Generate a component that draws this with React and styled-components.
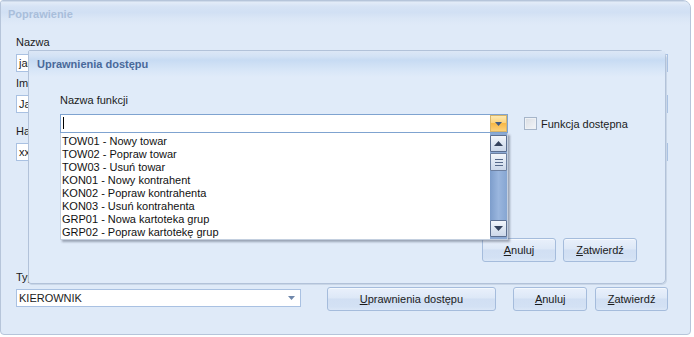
import React from 'react';
import styled, { createGlobalStyle } from 'styled-components';

const GlobalStyle = createGlobalStyle`
  body {
    margin: 0;
    background: #ffffff;
    font-family: "Liberation Sans", Arial, sans-serif;
    font-size: 11px;
    color: #1b1b1b;
  }
`;

const functions = [
  'TOW01 - Nowy towar',
  'TOW02 - Popraw towar',
  'TOW03 - Usuń towar',
  'KON01 - Nowy kontrahent',
  'KON02 - Popraw kontrahenta',
  'KON03 - Usuń kontrahenta',
  'GRP01 - Nowa kartoteka grup',
  'GRP02 - Popraw kartotekę grup',
];

const Arrow = ({ color = '#3d4f6e' }) => (
  <svg width="7" height="4" viewBox="0 0 7 4">
    <path d="M0 0 H7 L3.5 4 Z" fill={color} />
  </svg>
);

const App = () => {
  return (
    <>
      <GlobalStyle />
      <Window>
        <TitleBar>
          <Caption $faded>Poprawienie</Caption>
        </TitleBar>
        <Body>
          <Field $top={11}>
            <Label>Nazwa</Label>
            <TextBox>jan</TextBox>
          </Field>
          <Field $top={5}>
            <Label>Imię</Label>
            <TextBox>Jan</TextBox>
          </Field>
          <Field $top={12}>
            <Label>Hasło</Label>
            <TextBox>xxx</TextBox>
          </Field>
          <BottomRow>
            <Field $top={0} $bottom={4} $width={285}>
              <Label>Typ</Label>
              <TextBox>
                KIEROWNIK
                <ComboArrow>
                  <Arrow color="#6f87ab" />
                </ComboArrow>
              </TextBox>
            </Field>
            <Button $width={170} $left={26}>
              <u>U</u>prawnienia dostępu
            </Button>
            <Button $width={74} $left={17}>
              <u>A</u>nuluj
            </Button>
            <Button $width={73} $left={8}>
              <u>Z</u>atwierdź
            </Button>
          </BottomRow>
        </Body>

        <Dialog>
          <DialogTitle>
            <Caption>Uprawnienia dostępu</Caption>
          </DialogTitle>
          <DialogBody>
            <Label>Nazwa funkcji</Label>
            <ComboRow>
              <ComboWrap>
                <ComboInput>
                  <Caret />
                  <DropButton>
                    <Arrow color="#3f5a84" />
                  </DropButton>
                </ComboInput>
                <DropList>
                  <Items>
                    {functions.map((f) => (
                      <Item key={f}>{f}</Item>
                    ))}
                  </Items>
                  <ScrollBar>
                    <ScrollButton>
                      <svg width="9" height="5" viewBox="0 0 9 5">
                        <path d="M0 5 H9 L4.5 0 Z" fill="#34425c" />
                      </svg>
                    </ScrollButton>
                    <Thumb>
                      <svg width="8" height="7" viewBox="0 0 8 7">
                        <path d="M0 0.5 H8 M0 3.5 H8 M0 6.5 H8" stroke="#56698a" strokeWidth="1" />
                      </svg>
                    </Thumb>
                    <Track />
                    <ScrollButton>
                      <svg width="9" height="5" viewBox="0 0 9 5">
                        <path d="M0 0 H9 L4.5 5 Z" fill="#34425c" />
                      </svg>
                    </ScrollButton>
                  </ScrollBar>
                </DropList>
              </ComboWrap>
              <CheckLabel>
                <CheckBox />
                Funkcja dostępna
              </CheckLabel>
            </ComboRow>
            <DialogButtons>
              <Button $width={74}>
                <u>A</u>nuluj
              </Button>
              <Button $width={74}>
                <u>Z</u>atwierdź
              </Button>
            </DialogButtons>
          </DialogBody>
        </Dialog>
      </Window>
    </>
  );
};

const Window = styled.div`
  position: relative;
  width: 689px;
  height: 333px;
  border: 1px solid #b6c5da;
  border-radius: 3px 8px 4px 4px;
  background: #dfeaf8;
  display: flex;
  flex-direction: column;
  overflow: hidden;
`;

const TitleBar = styled.div`
  height: 22px;
  display: flex;
  align-items: center;
  padding-left: 7px;
  padding-top: 1px;
  background: linear-gradient(#e3ecf8 0%, #d6e3f5 20%, #d1e0f4 45%, #dae6f6 70%, #dfeaf8 100%);
  border-top: 1px solid #cfdbeb;
`;

const Caption = styled.span`
  font-weight: bold;
  font-size: 11px;
  color: ${(p) => (p.$faded ? '#a9bedb' : '#49699a')};
`;

const Body = styled.div`
  flex: 1;
  display: flex;
  flex-direction: column;
  padding: 0 22px 23px 15px;
`;

const Field = styled.div`
  display: flex;
  flex-direction: column;
  gap: 5px;
  margin-top: ${(p) => p.$top}px;
  margin-bottom: ${(p) => p.$bottom || 0}px;
  width: ${(p) => (p.$width ? `${p.$width}px` : 'auto')};
`;

const Label = styled.div`
  line-height: 13px;
  color: #1b1b1b;
`;

const TextBox = styled.div`
  position: relative;
  height: 16px;
  line-height: 16px;
  background: #ffffff;
  border: 1px solid #a9c1e2;
  padding-left: 2px;
  white-space: nowrap;
`;

const ComboArrow = styled.span`
  position: absolute;
  right: 5px;
  top: 6px;
  display: flex;
`;

const BottomRow = styled.div`
  margin-top: auto;
  display: flex;
  align-items: flex-end;
`;

const Button = styled.button`
  width: ${(p) => p.$width}px;
  height: 24px;
  margin-left: ${(p) => p.$left || 0}px;
  padding: 0;
  border: 1px solid #a5bcdc;
  border-radius: 3px;
  background: linear-gradient(#e9f0fb 0%, #dde8f7 45%, #d1dff3 50%, #d3e1f4 85%, #dbe7f7 100%);
  box-shadow: inset 0 1px 0 #f4f8fd;
  font-family: "Liberation Sans", Arial, sans-serif;
  font-size: 11px;
  color: #1b1b1b;
  u { text-decoration: underline; }
`;

const Dialog = styled.div`
  position: absolute;
  left: 27px;
  top: 49px;
  width: 636px;
  height: 232px;
  border: 1px solid #b2c2d9;
  border-radius: 2px 7px 5px 3px;
  background: #e0ebf9;
  display: flex;
  flex-direction: column;
  box-shadow: 1px 1px 0 #c9d6e7;
`;

const DialogTitle = styled.div`
  height: 26px;
  display: flex;
  align-items: center;
  padding-left: 8px;
  background: linear-gradient(#dce7f6 0%, #d3e2f5 20%, #c7dbf3 35%, #d6e5f7 70%, #e0ebf9 100%);
`;

const DialogBody = styled.div`
  flex: 1;
  display: flex;
  flex-direction: column;
  padding: 17px 28px 21px 31px;
`;

const ComboRow = styled.div`
  display: flex;
  align-items: center;
  margin-top: 7px;
`;

const ComboWrap = styled.div`
  position: relative;
  width: 448px;
`;

const ComboInput = styled.div`
  position: relative;
  height: 17px;
  background: #ffffff;
  border: 1px solid #7fa3d0;
`;

const Caret = styled.span`
  position: absolute;
  left: 2px;
  top: 2px;
  width: 1px;
  height: 12px;
  background: #000000;
`;

const DropButton = styled.span`
  position: absolute;
  right: 0;
  top: 0;
  width: 15px;
  height: 15px;
  border: 1px solid #d7b46a;
  background: linear-gradient(#fde9b2 0%, #fbd27c 45%, #f8b846 50%, #fbd17c 100%);
  display: flex;
  align-items: center;
  justify-content: center;
`;

const DropList = styled.div`
  position: absolute;
  left: 0;
  top: 19px;
  width: 446px;
  height: 106px;
  background: #ffffff;
  border: 1px solid #c3cfdf;
  border-top: none;
  display: flex;
  box-shadow: 2px 2px 2px rgba(70, 80, 100, 0.45);
  z-index: 2;
`;

const Items = styled.div`
  flex: 1;
  padding: 2px 0 0 1px;
`;

const Item = styled.div`
  height: 13px;
  line-height: 13px;
  white-space: nowrap;
  color: #111111;
`;

const ScrollBar = styled.div`
  width: 17px;
  display: flex;
  flex-direction: column;
  padding: 2px 0 2px 0;
  background: #8ba9d4;
`;

const ScrollButton = styled.div`
  height: 15px;
  border: 1px solid #5c6f90;
  border-radius: 1px;
  background: linear-gradient(#f3f6fb 0%, #dde6f2 50%, #ccd8ea 100%);
  display: flex;
  align-items: center;
  justify-content: center;
`;

const Thumb = styled(ScrollButton)`
  height: 16px;
  margin-top: 1px;
  border-color: #6d80a0;
`;

const Track = styled.div`
  flex: 1;
  background: linear-gradient(90deg, #7d9dcb, #9ab6de 50%, #86a6d2);
`;

const CheckLabel = styled.label`
  display: flex;
  align-items: center;
  gap: 4px;
  margin-left: 16px;
  color: #1b1b1b;
`;

const CheckBox = styled.span`
  width: 11px;
  height: 11px;
  border: 1px solid #a6b5c9;
  background: linear-gradient(135deg, #d9dde3, #f4f6f9);
  box-shadow: inset 0 0 0 1px #eef1f5;
`;

const DialogButtons = styled.div`
  margin-top: auto;
  display: flex;
  justify-content: flex-end;
  gap: 7px;
`;

export default App;
